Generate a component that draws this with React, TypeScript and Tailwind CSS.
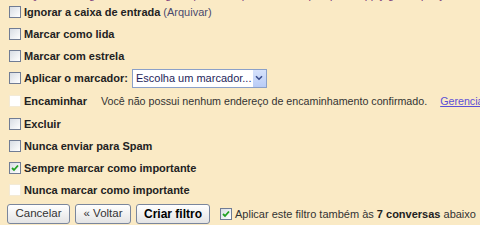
import React from "react";

const Box = ({ checked = false, disabled = false }: { checked?: boolean; disabled?: boolean }) => {
  if (disabled) {
    return <span className="inline-block w-[12px] h-[12px] shrink-0 bg-white border border-[#f3ead6]" />;
  }
  return (
    <span className="relative inline-block w-[12px] h-[12px] shrink-0 border border-[#707c94] bg-gradient-to-br from-[#d8dde4] to-white">
      {checked && (
        <svg viewBox="0 0 10 10" className="absolute inset-0 w-[10px] h-[10px]">
          <path d="M2 5 L4 7 L8 2.5" fill="none" stroke="#21a121" strokeWidth="1.8" />
        </svg>
      )}
    </span>
  );
};

const Row = ({ children }: { children: React.ReactNode }) => (
  <div className="flex items-center h-[22px] gap-[3px] whitespace-nowrap">{children}</div>
);

const Btn = ({ children, bold = false, w }: { children: React.ReactNode; bold?: boolean; w: string }) => (
  <button
    className={
      "h-[20px] rounded-[3px] border border-[#7a869c] bg-gradient-to-b from-white to-[#e4e4e4] leading-none text-center " +
      w +
      (bold ? " font-bold text-black text-[12px]" : " text-[#333] text-[11.5px]")
    }
  >
    {children}
  </button>
);

export default function App() {
  return (
    <div
      className="w-[480px] h-[225px] overflow-hidden bg-[#faeac5] text-[#222] text-[11px] pl-[9px]"
      style={{ fontFamily: '"Liberation Sans", Arial, sans-serif' }}
    >
      <div className="h-[1px] overflow-hidden relative">
        <div className="absolute bottom-0 left-[20px] text-[#7a3a7a] whitespace-nowrap leading-none">
          Quando chegar uma mensagem que corresponda a esta pesquisa: apply gmail query
        </div>
      </div>
      <Row>
        <Box />
        <span className="font-bold">Ignorar a caixa de entrada</span>
        <span className="text-[#4a4a6e]">(Arquivar)</span>
      </Row>
      <Row>
        <Box />
        <span className="font-bold">Marcar como lida</span>
      </Row>
      <Row>
        <Box />
        <span className="font-bold">Marcar com estrela</span>
      </Row>
      <Row>
        <Box />
        <span className="font-bold">Aplicar o marcador:</span>
        <div className="ml-[1px] flex items-center w-[135px] h-[19px] border border-[#8aa0c8] bg-white">
          <span className="flex-1 pl-[3px] text-[#1e1e5a] text-[11px]">Escolha um marcador...</span>
          <span className="w-[13px] h-[17px] bg-gradient-to-b from-[#d6e2fb] to-[#b9ccf6] flex items-center justify-center">
            <svg viewBox="0 0 8 6" className="w-[8px] h-[6px]">
              <path d="M1 1.2 L4 4.2 L7 1.2" fill="none" stroke="#3b4e8c" strokeWidth="1.6" />
            </svg>
          </span>
        </div>
      </Row>
      <div className="flex items-center h-[24px] gap-[3px] whitespace-nowrap">
        <Box disabled />
        <span className="font-bold">Encaminhar</span>
        <span className="ml-[11px] text-[#333] text-[10.7px]">Você não possui nenhum endereço de encaminhamento confirmado.</span>
        <span className="ml-[10px] text-[#5a4fd6] underline text-[10.7px]">Gerenciar endereços</span>
      </div>
      <Row>
        <Box />
        <span className="font-bold">Excluir</span>
      </Row>
      <Row>
        <Box />
        <span className="font-bold">Nunca enviar para Spam</span>
      </Row>
      <Row>
        <Box checked />
        <span className="font-bold">Sempre marcar como importante</span>
      </Row>
      <Row>
        <Box disabled />
        <span className="font-bold">Nunca marcar como importante</span>
      </Row>
      <div className="flex items-center gap-[5px] mt-[3px] -ml-[2px] whitespace-nowrap">
        <Btn w="w-[63px]">Cancelar</Btn>
        <Btn w="w-[56px]">« Voltar</Btn>
        <Btn w="w-[74px]" bold>Criar filtro</Btn>
        <span className="ml-[5px] flex items-center gap-[3px]">
          <Box checked />
          <span className="text-[#333]">
            Aplicar este filtro também às <b className="text-[#222]">7 conversas</b> abaixo
          </span>
        </span>
      </div>
    </div>
  );
}
